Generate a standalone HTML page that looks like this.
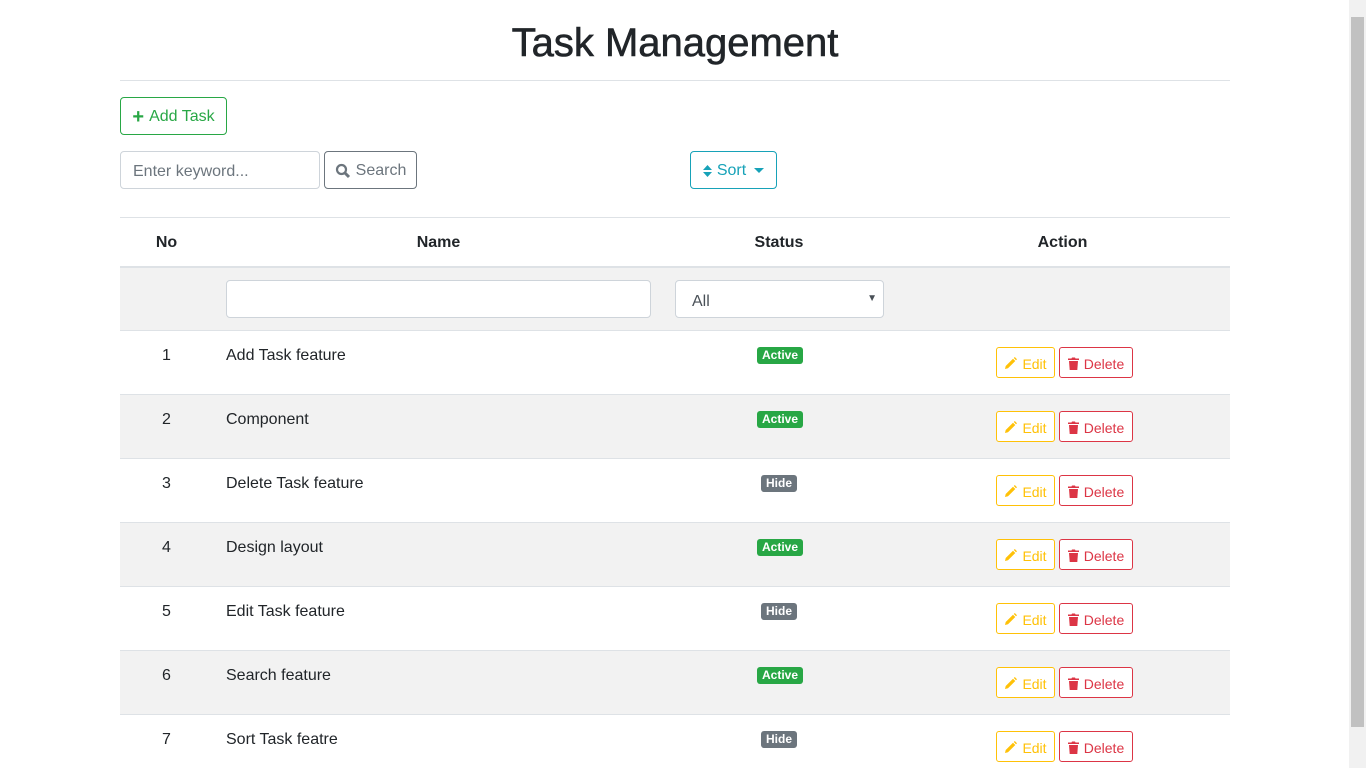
<!DOCTYPE html>
<html><head><meta charset="utf-8"><style>
*{box-sizing:border-box;margin:0;padding:0}
body{width:1366px;height:768px;overflow:hidden;background:#fff;font-family:"Liberation Sans",sans-serif;color:#212529;position:relative}
.a{position:absolute}
h1{position:absolute;left:120px;width:1110px;top:19px;text-align:center;font-size:40px;font-weight:500;line-height:48px;-webkit-text-stroke:0.6px #212529}
.btn{position:absolute;border:1px solid;border-radius:4px;font-size:16px;display:flex;align-items:center;justify-content:center;gap:5px;background:#fff;padding-top:2px}
.sm{font-size:14px;border-radius:3px;height:31px}
.row{position:absolute;left:120px;width:1110px;height:64px;border-top:1px solid #dee2e6}
.g{background:#f2f2f2}
.no{position:absolute;left:0;width:93px;text-align:center;top:16px;font-size:16px}
.nm{position:absolute;left:106px;top:16px;font-size:16px}
.bd{position:absolute;top:16px;color:#fff;font-weight:bold;font-size:12px;padding:2px 5px;border-radius:3px;line-height:13px}
.act{background:#28a745;left:637px}.hid{background:#6c757d;left:641px}
.sb{position:absolute;right:0;top:0;width:17px;height:768px;background:#f1f1f1}
</style></head><body>
<h1>Task Management</h1>
<div class="a" style="left:120px;top:80px;width:1110px;height:1px;background:#dee2e6"></div>
<div class="btn" style="left:120px;top:97px;width:107px;height:38px;border-color:#28a745;color:#28a745"><b style="font-size:20px">+</b>Add Task</div>
<div class="a" style="left:120px;top:151px;width:200px;height:38px;border:1px solid #ced4da;border-radius:4px;padding:11px 12px;color:#6c757d;font-size:16px">Enter keyword...</div>
<div class="btn" style="left:324px;top:151px;width:93px;height:38px;border-color:#6c757d;color:#6c757d"><svg width="16" height="16" viewBox="0 0 16 16"><circle cx="6.5" cy="6.5" r="4.5" fill="none" stroke="#6c757d" stroke-width="2.2"/><path d="M10 10l4 4" stroke="#6c757d" stroke-width="3"/></svg>Search</div>
<div class="btn" style="left:690px;top:151px;width:87px;height:38px;border-color:#17a2b8;color:#17a2b8"><svg width="9" height="14" viewBox="0 0 9 14"><path d="M0 6L4.5 1 9 6zM0 8l4.5 5L9 8z" fill="#17a2b8"/></svg>Sort<svg width="10" height="6" style="margin-left:3px"><path d="M0 0h10L5 5z" fill="#17a2b8"/></svg></div>
<div class="a" style="left:120px;top:217px;width:1110px;height:1px;background:#dee2e6"></div>
<div class="a" style="left:120px;top:234px;width:93px;text-align:center;font-weight:bold;font-size:16px">No</div>
<div class="a" style="left:226px;top:234px;width:425px;text-align:center;font-weight:bold;font-size:16px">Name</div>
<div class="a" style="left:675px;top:234px;width:208px;text-align:center;font-weight:bold;font-size:16px">Status</div>
<div class="a" style="left:900px;top:234px;width:325px;text-align:center;font-weight:bold;font-size:16px">Action</div>
<div class="a g" style="left:120px;top:266px;width:1110px;height:65px;border-top:2px solid #dee2e6"></div>
<div class="a" style="left:226px;top:280px;width:425px;height:38px;background:#fff;border:1px solid #ced4da;border-radius:4px"></div>
<div class="a" style="left:675px;top:280px;width:209px;height:38px;background:#fff;border:1px solid #ced4da;border-radius:4px;padding:12px 16px;font-size:16px;color:#495057">All<span style="position:absolute;right:6px;top:12px;font-size:10px">▼</span></div>
<div id="rows"></div>
<script>
var d=[["Add Task feature",1],["Component",1],["Delete Task feature",0],["Design layout",1],["Edit Task feature",0],["Search feature",1],["Sort Task featre",0]],h="";
d.forEach(function(r,i){var t=330+i*64;
h+='<div class="row'+(i%2?' g':'')+'" style="top:'+t+'px"><div class="no">'+(i+1)+'</div><div class="nm">'+r[0]+'</div>'+(r[1]?'<div class="bd act">Active</div>':'<div class="bd hid">Hide</div>')+'</div>';
h+='<div class="btn sm" style="left:996px;top:'+(t+17)+'px;width:59px;border-color:#ffc107;color:#ffc107"><svg width="13" height="13" viewBox="0 0 13 13"><path d="M1 12l.7-3L9 1.7l2.3 2.3L4 11.3zM9.8 1l1-1 2.2 2.2-1 1z" fill="#ffc107"/></svg>Edit</div>';
h+='<div class="btn sm" style="left:1059px;top:'+(t+17)+'px;width:74px;border-color:#dc3545;color:#dc3545"><svg width="11" height="13" viewBox="0 0 11 13"><path d="M0 1.5h3.5L4 .5h3l.5 1H11v1.5H0zM1 4h9l-.7 9H1.7z" fill="#dc3545"/></svg>Delete</div>';});
document.getElementById("rows").innerHTML=h;
</script>
<div class="sb"><div class="a" style="left:2px;top:17px;width:13px;height:710px;background:#c1c1c1"></div></div>
</body></html>
